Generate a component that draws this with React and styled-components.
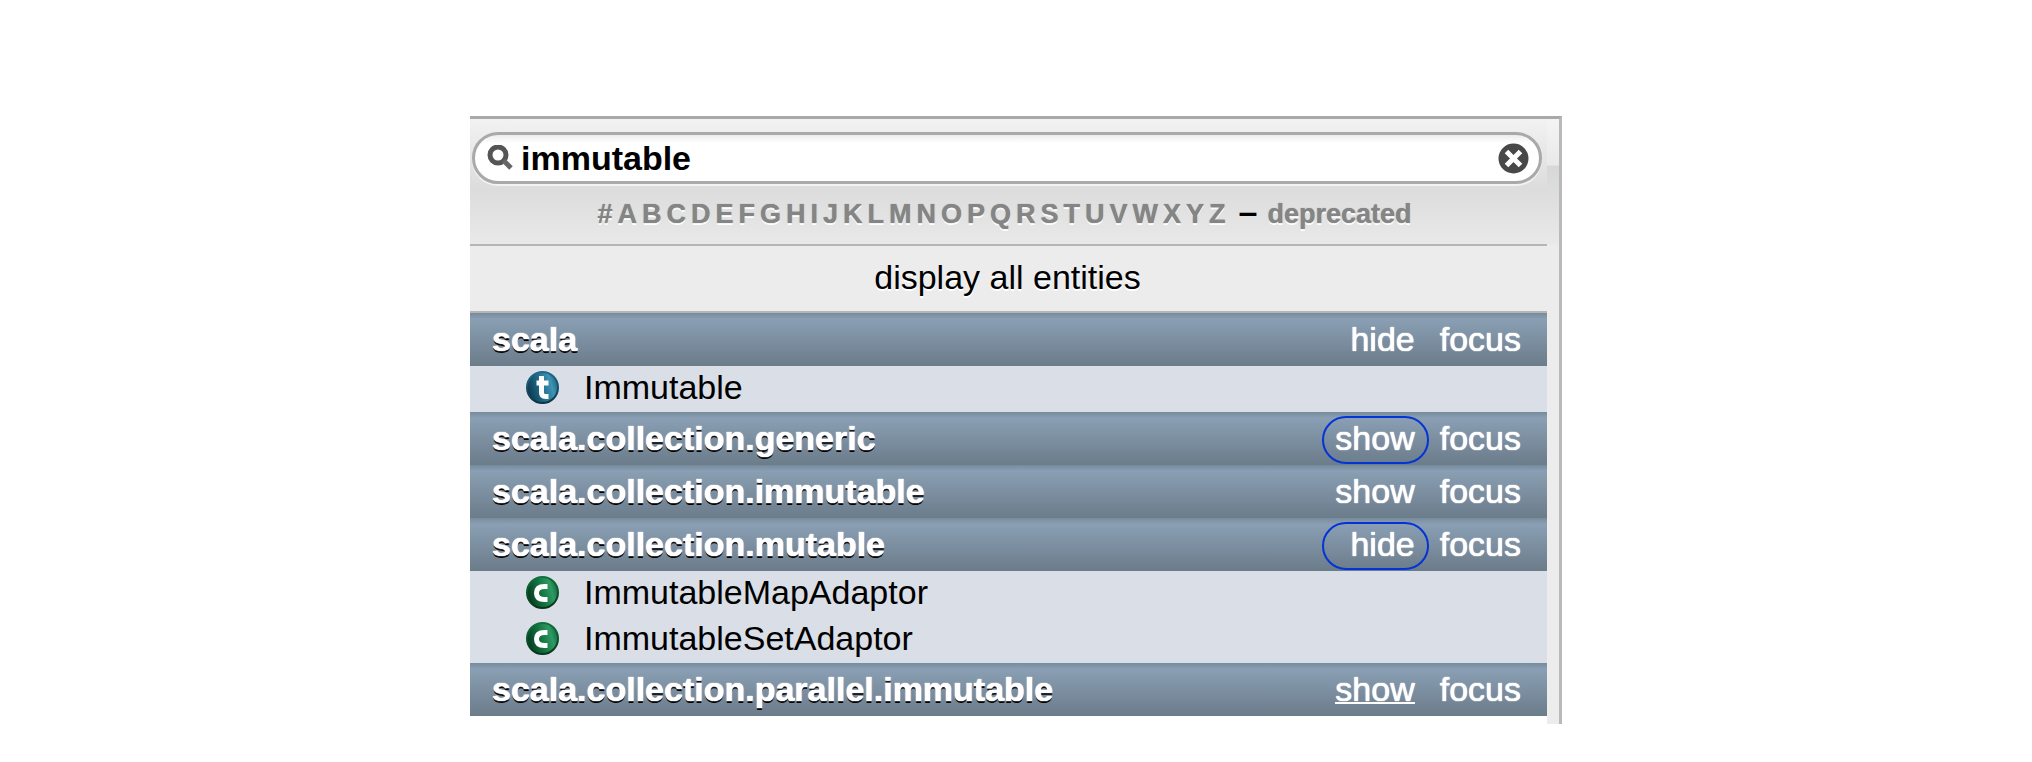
import React, { useState } from 'react'
import styled, { createGlobalStyle } from 'styled-components'

const letters = '#ABCDEFGHIJKLMNOPQRSTUVWXYZ'.split('')

const packages = [
  { name: 'scala', toggle: 'hide', entities: [{ kind: 't', name: 'Immutable' }] },
  { name: 'scala.collection.generic', toggle: 'show', circled: true, entities: [] },
  { name: 'scala.collection.immutable', toggle: 'show', entities: [] },
  {
    name: 'scala.collection.mutable',
    toggle: 'hide',
    circled: true,
    entities: [
      { kind: 'c', name: 'ImmutableMapAdaptor' },
      { kind: 'c', name: 'ImmutableSetAdaptor' },
    ],
  },
  { name: 'scala.collection.parallel.immutable', toggle: 'show', active: true, entities: [] },
]

const kinds = {
  t: { light: '#3f93b3', mid: '#1f6a8a', dark: '#0c3446', title: 'trait' },
  c: { light: '#2f9a63', mid: '#11713f', dark: '#06361b', title: 'class' },
}

const KindIcon = ({ kind }) => {
  const { light, mid, dark, title } = kinds[kind]
  return (
    <Badge viewBox="0 0 33 33" role="img" aria-label={title}>
      <defs>
        <linearGradient id={`fill-${kind}`} x1="0" y1="0.7" x2="1" y2="0.4">
          <stop offset="0" stopColor={dark} />
          <stop offset="0.45" stopColor={mid} />
          <stop offset="0.8" stopColor={light} />
          <stop offset="1" stopColor={mid} />
        </linearGradient>
        <linearGradient id={`rim-${kind}`} x1="0" y1="0" x2="0" y2="1">
          <stop offset="0" stopColor={mid} />
          <stop offset="1" stopColor={dark} />
        </linearGradient>
      </defs>
      <circle cx="16.5" cy="16.5" r="15.5" fill={`url(#fill-${kind})`} stroke={`url(#rim-${kind})`} strokeWidth="2" />
      {kind === 't' ? (
        <path d="M15.500 5v16.500q0 4 4 4h3M10.500 12h12" fill="none" stroke="#fff" strokeWidth="5" />
      ) : (
        <path d="M21.500 10.500h-3q-8 0-8 6.500t8 6.500h3" fill="none" stroke="#fff" strokeWidth="5" />
      )}
    </Badge>
  )
}

const App = () => {
  const [query, setQuery] = useState('immutable')

  return (
    <>
      <GlobalStyle />
      <Panel>
        <Filter>
          <SearchBox>
            <SearchIcon viewBox="0 0 26 26" aria-hidden="true">
              <circle cx="11" cy="10" r="8" fill="none" stroke="#555" strokeWidth="5" />
              <path d="M16.500 15.500L24 23" stroke="#666" strokeWidth="5" />
            </SearchIcon>
            <SearchInput
              type="text"
              aria-label="Search entities"
              value={query}
              onChange={(event) => setQuery(event.target.value)}
            />
            <ClearButton type="button" aria-label="Clear search" onClick={() => setQuery('')}>
              <svg viewBox="0 0 31 31" width="31" height="31">
                <circle cx="15.5" cy="15.5" r="15" fill="#484848" />
                <path d="M8.500 8.500L22.500 22.500M22.500 8.500L8.500 22.500" stroke="#fff" strokeWidth="5" />
              </svg>
            </ClearButton>
          </SearchBox>
          <Letters>
            {letters.map((letter) => (
              <LetterLink href="#" key={letter}>{letter}</LetterLink>
            ))}
            <Dash>–</Dash>
            <LetterLink href="#">deprecated</LetterLink>
          </Letters>
        </Filter>
        <Results>
          <DisplayAll href="#">display all entities</DisplayAll>
          {packages.map((pack) => (
            <section key={pack.name}>
              <PackageRow>
                <PackageName href="#">{pack.name}</PackageName>
                <Action href="#" $circled={pack.circled} $active={pack.active}>{pack.toggle}</Action>
                <Action href="#">focus</Action>
              </PackageRow>
              {pack.entities.map((entity) => (
                <Entity href="#" key={entity.name}>
                  <KindIcon kind={entity.kind} />
                  {entity.name}
                </Entity>
              ))}
            </section>
          ))}
        </Results>
      </Panel>
    </>
  )
}

const GlobalStyle = createGlobalStyle`
    body{
        margin: 0;
        background-color: #fff;
        font-family: "Liberation Sans", Arial, sans-serif;
        font-size: 34px;
    }
    a{
        color: inherit;
        text-decoration: none;
    }
`;

const Panel = styled.main`
    box-sizing: border-box;
    width: 90%;
    max-width: 1092px;
    margin: 116px auto 0;
    border-top: 3px solid #a9a9a9;
    border-right: 3px solid #b9b9b9;
    background: linear-gradient(#f4f4f4, #e9e9e9 46px, #d6d7d7 47px, #e9e9e9 125px, #ececec 126px);
`;

const Filter = styled.header`
    box-sizing: border-box;
    height: 127px;
    margin-right: 12px;
    padding-top: 13px;
    border-bottom: 2px solid #b5b5b5;
    background: linear-gradient(#f2f2f2, #dcdcdc 70px, #e9e9e9);
`;

const SearchBox = styled.div`
    box-sizing: border-box;
    display: flex;
    align-items: center;
    height: 52px;
    margin: 0 5px 0 2px;
    padding: 0 10px 0 12px;
    border: 3px solid #a9a9a9;
    border-radius: 26px;
    background: linear-gradient(#ececec, #fff 8px);
    box-shadow: 0 2px 0 #f2f2f2;
`;

const SearchIcon = styled.svg`
    width: 26px;
    height: 26px;
`;

const SearchInput = styled.input`
    flex: 1;
    min-width: 0;
    height: 44px;
    margin: 0;
    padding: 0 0 0 8px;
    border: none;
    outline: none;
    background: transparent;
    color: #000;
    font: bold 34px "Liberation Sans", Arial, sans-serif;
`;

const ClearButton = styled.button`
    display: flex;
    padding: 0;
    border: none;
    background: none;
    cursor: pointer;
`;

const Letters = styled.nav`
    display: flex;
    justify-content: center;
    align-items: baseline;
    gap: 5px;
    padding: 7px 8px 0 0;
    font-size: 27px;
    line-height: 40px;
`;

const LetterLink = styled.a`
    color: #858585;
    font-weight: bold;
    text-shadow: 0 0 1px #858585, 0 2px 0 #fff;
`;

const Dash = styled.span`
    margin: 0 5px 0 8px;
    font-size: 34px;
    font-weight: bold;
`;

const Results = styled.div`
    margin-right: 12px;
    border-bottom: 8px solid #fff;
`;

const DisplayAll = styled.a`
    display: block;
    padding: 0 2px 2px 0;
    border-bottom: 2px solid #b5b5b5;
    line-height: 63px;
    text-align: center;
    text-shadow: 0 2px 0 #fff;
`;

const PackageRow = styled.div`
    display: flex;
    gap: 25px;
    padding: 0 26px 0 22px;
    line-height: 53px;
    color: #fff;
    background: linear-gradient(#768b9c, #8a9fb4 6px, #6b7c8a);
`;

const PackageName = styled.a`
    flex: 1;
    font-weight: bold;
    text-shadow: 0 0 1px #fff, 0 0 1px #fff, 0 2px 0 #000;
`;

const Action = styled.a`
    position: relative;
    text-shadow: 0 0 1px #fff, 0 0 1px #fff;
    text-decoration: ${({ $active }) => ($active ? 'underline' : 'none')};
    text-decoration-thickness: 2px;

    &::after{
        content: "";
        display: ${({ $circled }) => ($circled ? 'block' : 'none')};
        position: absolute;
        box-sizing: border-box;
        top: 4px;
        right: -14px;
        width: 107px;
        height: 48px;
        border: 2px solid #0433d6;
        border-radius: 24px;
    }
`;

const Entity = styled.a`
    display: flex;
    align-items: center;
    gap: 25px;
    padding: 0 0 4px 56px;
    line-height: 42px;
    background-color: #dadee6;
`;

const Badge = styled.svg`
    width: 33px;
    height: 33px;
`;

export default App
